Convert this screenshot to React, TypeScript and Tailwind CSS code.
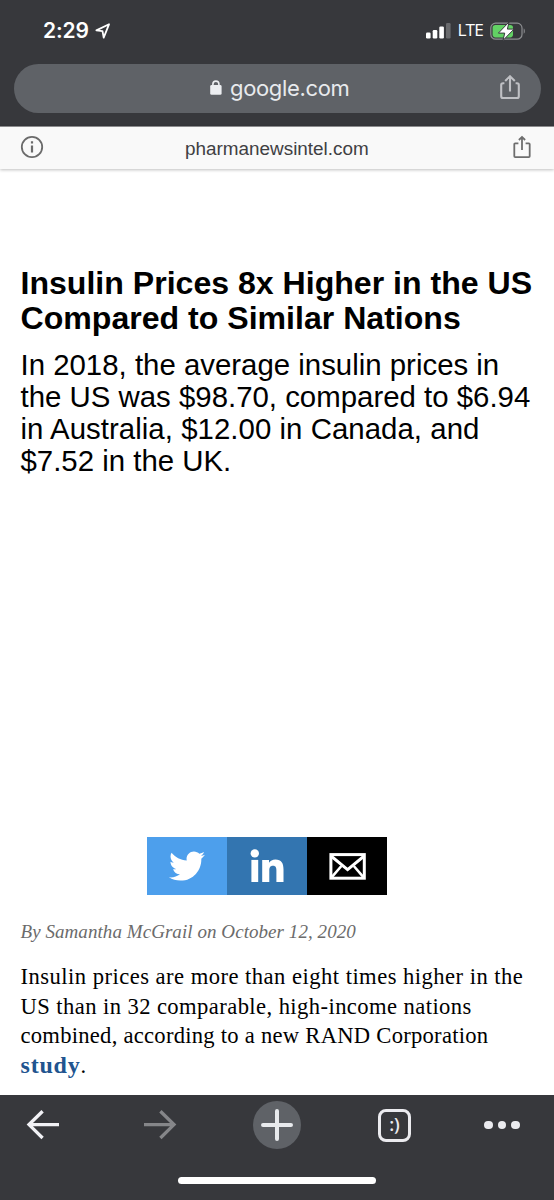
import { FaTwitter } from "react-icons/fa";

function LocationIcon() {
  return (
    <svg width="16" height="17" viewBox="0 0 16 17" fill="none" className="ml-1.5">
      <path
        d="M1.4 7.4 14 1.3 8.7 14.6 7.5 8.2Z"
        stroke="#fff"
        strokeWidth="1.8"
        strokeLinejoin="round"
      />
    </svg>
  );
}

function SignalIcon() {
  return (
    <svg width="25" height="17" viewBox="0 0 25 17" fill="#fff">
      <rect x="0" y="9.5" width="4.6" height="5.9" rx="1.2" />
      <rect x="6.7" y="7" width="4.6" height="8.4" rx="1.2" />
      <rect x="13.3" y="3.6" width="4.6" height="11.8" rx="1.2" />
      <rect x="20" y="0" width="4.6" height="15.4" rx="1.2" fillOpacity="0.25" />
    </svg>
  );
}

function BatteryIcon() {
  return (
    <svg width="36" height="20" viewBox="0 0 36 20" fill="none" className="-mt-px">
      <rect x="0.8" y="2.2" width="31.2" height="16" rx="4.8" stroke="#8d8e91" strokeWidth="1.2" />
      <path d="M33.7 7.6c1.5.5 1.5 4.7 0 5.2Z" fill="#8d8e91" />
      <rect x="2.6" y="4" width="20.4" height="12.4" rx="2.8" fill="#62d164" />
      <path
        d="M19 1 8.4 12.1h6.3L13 19.4 24 8.1h-6.6Z"
        fill="#fff"
        stroke="#37383c"
        strokeWidth="1"
        strokeLinejoin="round"
      />
    </svg>
  );
}

function LockIcon() {
  return (
    <svg width="12" height="16" viewBox="0 0 12 16">
      <rect x="0.2" y="5" width="11.4" height="9.8" rx="1.4" fill="#eceef1" />
      <path d="M2.9 6V4.1a3 3 0 0 1 6 0V6" fill="none" stroke="#eceef1" strokeWidth="1.6" />
    </svg>
  );
}

function HomeShareIcon() {
  return (
    <svg width="20" height="26" viewBox="0 0 20 26" fill="none" stroke="#bfc0c4" strokeWidth="2.1">
      <path d="M4.4 8.2H3A1.8 1.8 0 0 0 1.2 10v11.2A1.8 1.8 0 0 0 3 23h14a1.8 1.8 0 0 0 1.8-1.8V10A1.8 1.8 0 0 0 17 8.2h-1.4" />
      <path d="M10 16.5V1.8M5.2 6 10 1.3 14.8 6" />
    </svg>
  );
}

function PageShareIcon() {
  return (
    <svg width="18" height="24" viewBox="0 0 18 24" fill="none" stroke="#6e6e6e" strokeWidth="1.8" className="-mt-[3px]">
      <path d="M5.4 8.3H2.2A.9.9 0 0 0 1.3 9.2v12a.9.9 0 0 0 .9.9h13.6a.9.9 0 0 0 .9-.9v-12a.9.9 0 0 0-.9-.9h-3.2" />
      <path d="M9 15V2.2M5.9 5 9 1.9 12.1 5" />
    </svg>
  );
}

function InfoIcon() {
  return (
    <svg width="24" height="24" viewBox="0 0 24 24" fill="none" className="-mt-[2px]">
      <circle cx="12" cy="12" r="10.2" stroke="#6b6b6b" strokeWidth="1.8" />
      <path d="M12 10.4v7M12 6.2v2.3" stroke="#6b6b6b" strokeWidth="2.2" />
    </svg>
  );
}

function LinkedInIcon() {
  return (
    <svg width="34" height="34" viewBox="0 0 34 34" fill="#fff">
      <circle cx="4.8" cy="4.4" r="4.2" />
      <path d="M1.4 10.9h6.8V33H1.4Z" />
      <path d="M12.2 10.9h6.8v2.8c1.2-2 3.5-3.3 6.4-3.3 6.1 0 8.1 3.8 8.1 9.9V33h-7.1V21.6c0-2.6-.4-4.8-3.4-4.8-3.2 0-3.7 2.3-3.7 4.9V33h-7.1Z" />
    </svg>
  );
}

function MailIcon() {
  return (
    <svg width="37" height="27" viewBox="0 0 37 27" fill="none" stroke="#fff" strokeWidth="3">
      <rect x="1.9" y="1.6" width="33.4" height="23.6" />
      <path d="M2 3 18.6 16.6 35.2 3" strokeWidth="3" />
      <path d="M2.6 24.4l9.8-11.4M34.6 24.4l-9.8-11.4" strokeWidth="2.6" />
    </svg>
  );
}

function StatusBar() {
  return (
    <div className="flex h-[64px] items-start pl-[43px] pr-[28px] pt-[20px] text-white">
      <div className="flex h-[22px] items-center">
        <span className="font-['Inter'] text-[21px] leading-[22px] font-semibold tracking-[-0.1px]">2:29</span>
        <LocationIcon />
      </div>
      <div className="ml-auto flex h-[22px] items-center">
        <SignalIcon />
        <span className="ml-[6px] mr-[7px] font-['Open_Sans'] text-[17.2px] leading-[22px] font-medium tracking-[-0.8px] -translate-y-px">
          LTE
        </span>
        <BatteryIcon />
      </div>
    </div>
  );
}

function AddressBar() {
  return (
    <div className="mx-[13.5px] flex h-[48.5px] items-center rounded-full bg-[#5f6267] pl-[196.5px] pr-[21px]">
      <LockIcon />
      <span className="ml-[8px] font-['Inter'] text-[22px] leading-[28px] tracking-[-0.35px] text-[#e8eaed]">
        google.com
      </span>
      <div className="ml-auto">
        <HomeShareIcon />
      </div>
    </div>
  );
}

function ShareButtons() {
  return (
    <div className="mx-auto flex h-[58px] w-[240px] -translate-x-[10px] text-white">
      <button className="flex w-20 items-center justify-center bg-[#4d9fec]">
        <FaTwitter size={36} />
      </button>
      <button className="flex w-20 items-center justify-center bg-[#3375b0]">
        <LinkedInIcon />
      </button>
      <button className="flex w-20 items-center justify-center bg-black">
        <MailIcon />
      </button>
    </div>
  );
}

function BottomNav() {
  return (
    <nav className="mt-auto h-[105px] bg-[#37383c]">
      <div className="flex h-[60px] items-center">
        <div className="flex w-[86px] justify-center">
          <svg width="34" height="30" viewBox="0 0 34 30" fill="none" stroke="#f1f1f5" strokeWidth="3.3">
            <path d="M33 14.6H3M16.6 1.2 3 14.6l13.6 13.4" />
          </svg>
        </div>
        <div className="ml-[32px] flex w-[84px] justify-center">
          <svg width="34" height="30" viewBox="0 0 34 30" fill="none" stroke="#858689" strokeWidth="3.3">
            <path d="M1 14.6h30M17.4 1.2 31 14.6 17.4 28" />
          </svg>
        </div>
        <button className="ml-[51px] flex size-[48px] items-center justify-center rounded-full bg-[#5f6267]">
          <svg width="34" height="34" viewBox="0 0 34 34" stroke="#e8eaed" strokeWidth="4" strokeLinecap="round">
            <path d="M17 3v28M3 17h28" />
          </svg>
        </button>
        <div className="ml-[77px] flex size-[33px] items-center justify-center rounded-[8px] border-[3px] border-[#ebebef] pb-0.5 font-['Open_Sans'] text-[18px] leading-none font-semibold text-[#ebebef]">
          :)
        </div>
        <div className="ml-[73px] flex gap-[5px]">
          <span className="size-[8.5px] rounded-full bg-[#ebebef]" />
          <span className="size-[8.5px] rounded-full bg-[#ebebef]" />
          <span className="size-[8.5px] rounded-full bg-[#ebebef]" />
        </div>
      </div>
      <div className="mx-auto mt-[22px] h-[7px] w-[198px] rounded-full bg-white" />
    </nav>
  );
}

export default function App() {
  return (
    <div className="flex h-[1200px] w-[554px] flex-col overflow-hidden bg-white">
      <header className="h-[126px] bg-[#37383c]">
        <StatusBar />
        <AddressBar />
      </header>

      <div className="flex h-[43px] items-center border-t border-[#8b8b8d] bg-[#f9f9f9] pl-5 pr-[23px] shadow-[0_1px_3px_rgba(0,0,0,0.25)]">
        <InfoIcon />
        <span className="ml-[141px] pt-0.5 font-['Liberation_Sans',sans-serif] text-[18.9px] leading-[24px] text-[#3f4043]">
          pharmanewsintel.com
        </span>
        <div className="ml-auto">
          <PageShareIcon />
        </div>
      </div>

      <main className="px-[20.5px] pt-[97px] text-black">
        <h1 className="font-['Liberation_Sans',sans-serif] text-[32.1px] leading-[35px] font-bold whitespace-nowrap">
          <span className="block">Insulin Prices 8x Higher in the US</span>
          <span className="block">Compared to Similar Nations</span>
        </h1>
        <p className="mt-[13px] font-['Liberation_Sans',sans-serif] text-[29.4px] leading-[32px] whitespace-nowrap">
          <span className="block">In 2018, the average insulin prices in</span>
          <span className="block">the US was $98.70, compared to $6.94</span>
          <span className="block tracking-[0.04px]">in Australia, $12.00 in Canada, and</span>
          <span className="block">$7.52 in the UK.</span>
        </p>

        <div className="mt-[360px]">
          <ShareButtons />
        </div>

        <p className="mt-[25px] font-['Liberation_Serif',serif] text-[19px] leading-6 tracking-[0.06px] text-[#6b6b6b] italic whitespace-nowrap">
          By Samantha McGrail on October 12, 2020
        </p>
        <p className="mt-[18px] font-['Liberation_Serif',serif] text-[22.6px] leading-[29.5px] whitespace-nowrap">
          <span className="block tracking-[0.47px]">Insulin prices are more than eight times higher in the</span>
          <span className="block tracking-[0.42px]">US than in 32 comparable, high-income nations</span>
          <span className="block tracking-[0.26px]">combined, according to a new RAND Corporation</span>
          <span className="block">
            <a className="text-[24px] leading-none font-bold tracking-[0.8px] text-[#21548f]">study</a>.
          </span>
        </p>
      </main>

      <BottomNav />
    </div>
  );
}
